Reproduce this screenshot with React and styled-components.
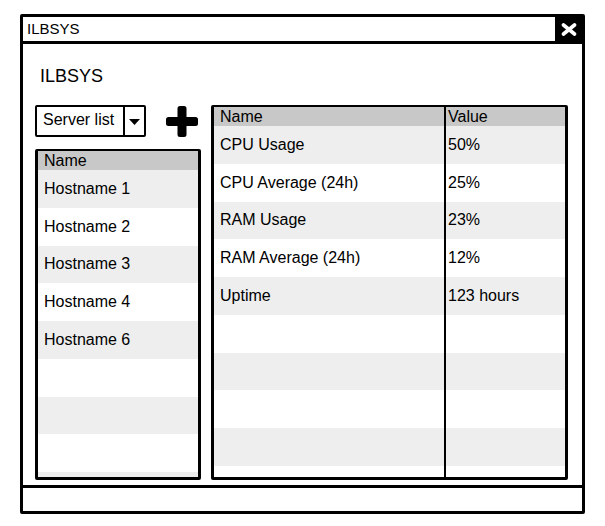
import React from "react";
import styled, { createGlobalStyle } from "styled-components";

const GlobalStyle = createGlobalStyle`
  html, body { margin: 0; padding: 0; background: #fff; }
  body { font-family: "Liberation Sans", Arial, sans-serif; color: #000; }
  * { box-sizing: border-box; }
`;

const Page = styled.div`
  padding: 14px 0 0 20px;
`;

const Window = styled.div`
  width: 565px;
  height: 500px;
  border: 3px solid #000;
  border-radius: 2px;
  display: flex;
  flex-direction: column;
  background: #fff;
`;

const TitleBar = styled.div`
  flex: none;
  height: 27px;
  border-bottom: 3px solid #000;
  display: flex;
  align-items: stretch;
  justify-content: space-between;
`;

const Title = styled.div`
  font-size: 15px;
  line-height: 24px;
  padding-left: 4px;
`;

const CloseButton = styled.div`
  width: 27px;
  background: #000;
  display: flex;
  align-items: center;
  justify-content: center;
`;

const Body = styled.div`
  flex: 1;
  min-height: 0;
  padding: 23px 14px 5px 12px;
  display: flex;
  flex-direction: column;
`;

const StatusBar = styled.div`
  flex: none;
  height: 26px;
  border-top: 3px solid #000;
`;

const Heading = styled.div`
  font-size: 18px;
  line-height: 18px;
  margin-left: 5px;
  margin-bottom: 20px;
`;

const Panels = styled.div`
  display: grid;
  grid-template-columns: 166px 357px;
  column-gap: 10px;
  height: 375px;
`;

const LeftColumn = styled.div`
  display: flex;
  flex-direction: column;
  gap: 12px;
  min-height: 0;
`;

const Toolbar = styled.div`
  height: 32px;
  display: flex;
  align-items: center;
  gap: 20px;
`;

const Select = styled.div`
  width: 111px;
  height: 32px;
  border: 2px solid #000;
  border-radius: 2px;
  display: flex;
`;

const SelectLabel = styled.div`
  flex: 1;
  font-size: 16px;
  line-height: 26px;
  padding-left: 6px;
`;

const SelectArrow = styled.div`
  width: 21px;
  border-left: 2px solid #000;
  display: flex;
  align-items: center;
  justify-content: center;
  padding-top: 1px;
`;

const Panel = styled.div`
  flex: 1;
  min-height: 0;
  border: 3px solid #000;
  border-top-width: 2px;
  border-radius: 2px;
  overflow: hidden;
  display: flex;
  flex-direction: column;
`;

const Row = styled.div`
  flex: none;
  height: ${(p) => (p.$header ? "19px" : "37.75px")};
  background: ${(p) => (p.$header ? "#c8c8c8" : p.$alt ? "#eeeeee" : "#ffffff")};
  display: grid;
  grid-template-columns: ${(p) => p.$cols || "1fr"};
  font-size: 16px;
`;

const Cell = styled.div`
  display: flex;
  align-items: center;
  padding-left: ${(p) => p.$pad}px;
  border-left: ${(p) => (p.$divider ? "2px solid #000" : "none")};
  white-space: nowrap;
  line-height: 18px;
`;

const hosts = ["Hostname 1", "Hostname 2", "Hostname 3", "Hostname 4", "Hostname 6", "", "", "", ""];
const stats = [
  ["CPU Usage", "50%"],
  ["CPU Average (24h)", "25%"],
  ["RAM Usage", "23%"],
  ["RAM Average (24h)", "12%"],
  ["Uptime", "123 hours"],
  ["", ""],
  ["", ""],
  ["", ""],
  ["", ""],
  ["", ""],
];

const COLS = "230px 1fr";

export default function App() {
  return (
    <>
      <GlobalStyle />
      <Page>
        <Window>
          <TitleBar>
            <Title>ILBSYS</Title>
            <CloseButton>
              <svg width="16" height="13" viewBox="0 0 16 13">
                <path d="M2.5 2 L13.5 11 M13.5 2 L2.5 11" stroke="#fff" strokeWidth="3.6" strokeLinecap="round" fill="none" />
              </svg>
            </CloseButton>
          </TitleBar>
          <Body>
            <Heading>ILBSYS</Heading>
            <Panels>
              <LeftColumn>
                <Toolbar>
                  <Select>
                    <SelectLabel>Server list</SelectLabel>
                    <SelectArrow>
                      <svg width="11" height="6" viewBox="0 0 11 6">
                        <polygon points="0,0 11,0 5.5,6" fill="#000" />
                      </svg>
                    </SelectArrow>
                  </Select>
                  <svg width="32" height="31" viewBox="0 0 32 31">
                    <rect x="0" y="11" width="32" height="9" rx="2.5" fill="#000" />
                    <rect x="11.5" y="0" width="9" height="31" rx="2.5" fill="#000" />
                  </svg>
                </Toolbar>
                <Panel>
                  <Row $header>
                    <Cell $pad={6}>Name</Cell>
                  </Row>
                  {hosts.map((h, i) => (
                    <Row key={i} $alt={i % 2 === 0}>
                      <Cell $pad={6}>{h}</Cell>
                    </Row>
                  ))}
                </Panel>
              </LeftColumn>
              <Panel>
                <Row $header $cols={COLS}>
                  <Cell $pad={6}>Name</Cell>
                  <Cell $pad={2} $divider>Value</Cell>
                </Row>
                {stats.map(([n, v], i) => (
                  <Row key={i} $alt={i % 2 === 0} $cols={COLS}>
                    <Cell $pad={6}>{n}</Cell>
                    <Cell $pad={2} $divider>{v}</Cell>
                  </Row>
                ))}
              </Panel>
            </Panels>
          </Body>
          <StatusBar />
        </Window>
      </Page>
    </>
  );
}
